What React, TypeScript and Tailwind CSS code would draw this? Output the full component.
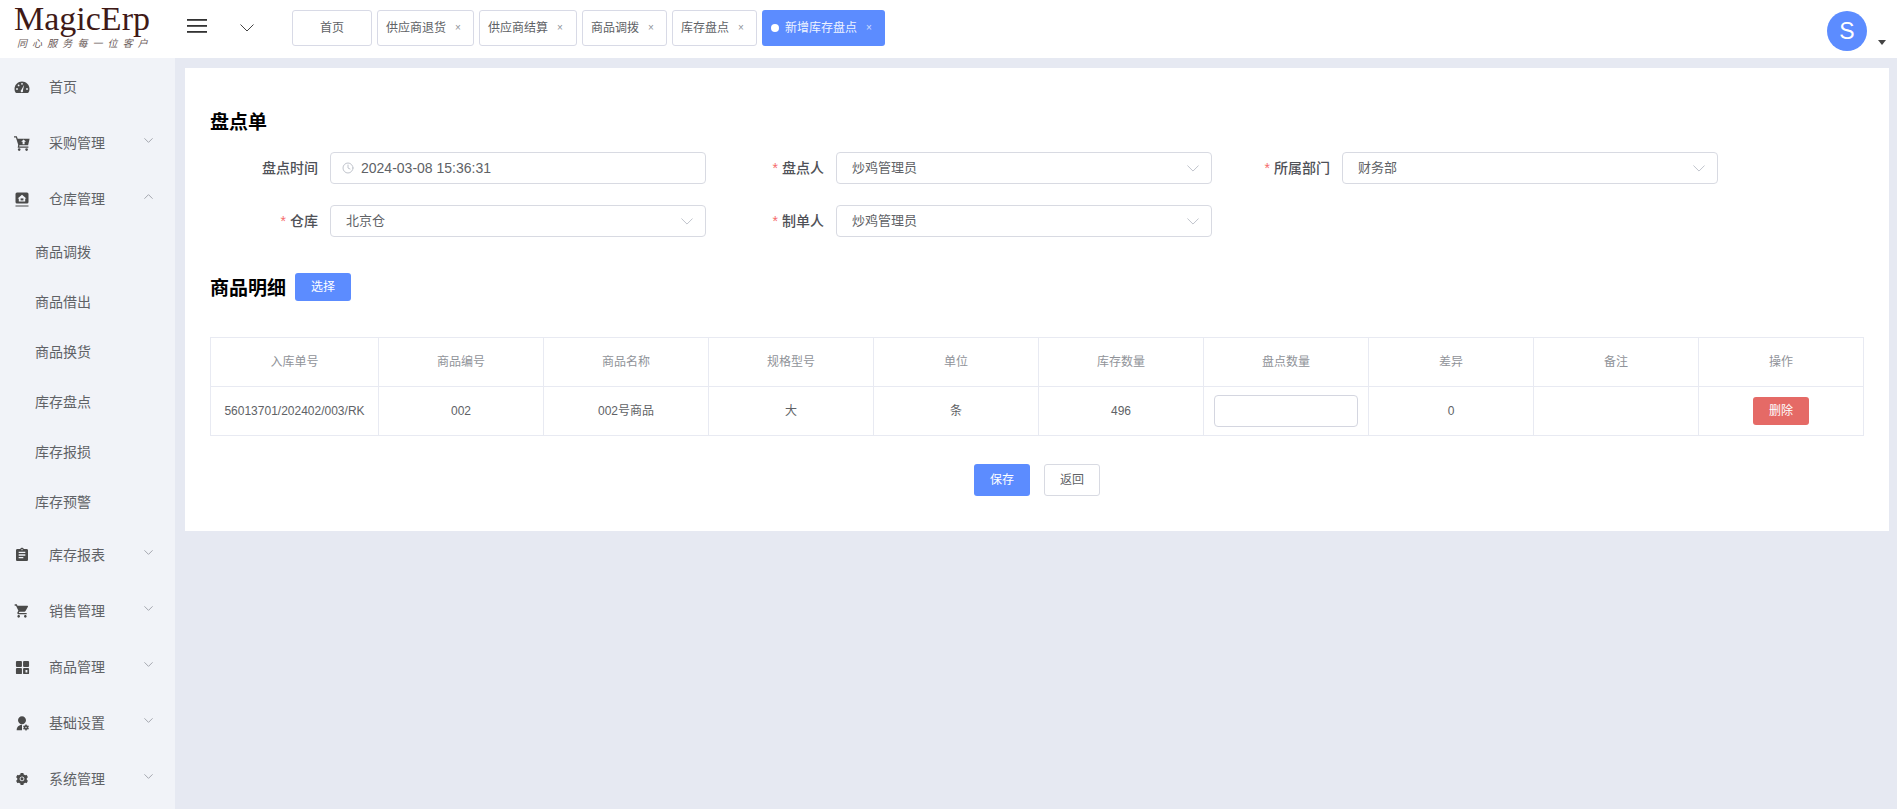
import { AiFillSetting } from 'react-icons/ai';
import { MdAssignment, MdShoppingCart } from 'react-icons/md';
import { RiUserSettingsFill } from 'react-icons/ri';
import { FiClock } from 'react-icons/fi';
import type { ReactNode } from 'react';

const font = 'font-["Liberation_Sans","Noto_Sans_CJK_SC",sans-serif]';

function Chevron({ up, className }: { up?: boolean; className: string }) {
    return (
        <svg viewBox="0 0 14 8" className={className} fill="none" stroke="currentColor" strokeWidth="1">
            <polyline vectorEffect="non-scaling-stroke" points={up ? '0.5,7.5 7,1 13.5,7.5' : '0.5,0.5 7,7 13.5,0.5'} />
        </svg>
    );
}

function GaugeIcon() {
    return (
        <svg viewBox="0 0 16 14" className="w-4 h-[14px]" fill="currentColor">
            <path d="M8 1.5C3.9 1.5.5 4.8.5 9c0 1.4.4 2.6 1 3.6.2.3.5.4.8.4h11.4c.3 0 .6-.1.8-.4.6-1 1-2.2 1-3.6 0-4.2-3.4-7.5-7.5-7.5z" />
            <g fill="#f1f3f8">
                <circle cx="3" cy="9" r="0.9" />
                <circle cx="4.6" cy="5.4" r="0.9" />
                <circle cx="8" cy="3.8" r="0.9" />
                <circle cx="13" cy="9" r="0.9" />
                <path d="M10.2 4.8 8.9 10.4a1.2 1.2 0 1 1-1.6-.4z" />
            </g>
        </svg>
    );
}

function PurchaseIcon() {
    return (
        <svg viewBox="0 0 16 15" className="w-4 h-[15px]" fill="currentColor">
            <path d="M0 0.3h2.8l.9 2.5H15.6l-1.5 6.4H5.4l-.2 1.3h9.2v1.2H3.7l.5-2.9L1.9 1.6H0z" />
            <circle cx="5.2" cy="13.6" r="1.3" />
            <circle cx="12.6" cy="13.6" r="1.3" />
            <path d="M9.6 3.4 12 5.8h-1.4v2.4H8.6V5.8H7.2z" fill="#f1f3f8" />
        </svg>
    );
}

function WarehouseIcon() {
    return (
        <svg viewBox="0 0 14 15" className="w-[14px] h-[15px]" fill="currentColor">
            <path d="M2 0.5h10A1.5 1.5 0 0 1 13.5 2v8A1.5 1.5 0 0 1 12 11.5H2A1.5 1.5 0 0 1 .5 10V2A1.5 1.5 0 0 1 2 .5z" />
            <path d="M7 2.8 11.4 6.6h-1.2v3H3.8v-3H2.6z" fill="#f1f3f8" />
            <rect x="5.6" y="6.4" width="2.8" height="2" />
            <rect x="0.5" y="13.5" width="13" height="1" />
        </svg>
    );
}

function GoodsIcon() {
    return (
        <svg viewBox="0 0 16 16" className="w-[15px] h-[15px]" fill="currentColor">
            <rect x="1" y="1" width="6.4" height="6.4" rx="1" />
            <rect x="8.6" y="1" width="6.4" height="6.4" rx="1" />
            <rect x="1" y="8.6" width="6.4" height="6.4" rx="1" />
            <path d="M9.6 8.6h4.4a1 1 0 0 1 1 1V14a1 1 0 0 1-1 1H9.6a1 1 0 0 1-1-1V9.6a1 1 0 0 1 1-1zm1.6 2v2.8h2v-2.8z" fillRule="evenodd" />
        </svg>
    );
}

function MenuItem({ icon, label, open, arrow = true }: { icon: ReactNode; label: string; open?: boolean; arrow?: boolean }) {
    return (
        <div className="h-14 flex items-center pl-[14px] pr-[22px] text-[#606266]">
            <span className="w-4 flex justify-center text-[#4a4a4a]">{icon}</span>
            <span className="ml-[19px] text-sm flex-1">{label}</span>
            {arrow && <Chevron up={open} className="text-[#a4a7af] w-[9px] h-[5px] -mt-[5px]" />}
        </div>
    );
}

function SubItem({ label }: { label: string }) {
    return <div className="h-[50px] flex items-center pl-[35px] text-sm text-[#606266]">{label}</div>;
}

function Tab({ label, w, active, center }: { label: string; w: string; active?: boolean; center?: boolean }) {
    if (active) {
        return (
            <div className={`${w} h-9 rounded-[3px] bg-[#5c8cff] text-white flex items-center pl-[9px] text-xs`}>
                <span className="w-2 h-2 rounded-full bg-white mr-[6px]" />
                <span className="opacity-90">{label}</span>
                <span className="ml-[9px] text-[10px] opacity-70">×</span>
            </div>
        );
    }
    return (
        <div className={`${w} h-9 rounded-[3px] bg-white border border-[#d8dae6] text-[#606266] flex items-center text-xs ${center ? 'justify-center' : 'pl-[8px]'}`}>
            <span>{label}</span>
            {!center && <span className="ml-[9px] text-[10px] text-[#909399]">×</span>}
        </div>
    );
}

function Field({ label, required, children }: { label: string; required?: boolean; children: ReactNode }) {
    return (
        <div className="flex items-center w-[496px] mr-[10px] shrink-0">
            <div className="w-[120px] pr-3 text-right text-sm text-[#4f5157] font-medium">
                {required && <span className="text-[#f56c6c] mr-1">*</span>}
                {label}
            </div>
            {children}
        </div>
    );
}

function SelectBox({ value }: { value: string }) {
    return (
        <div className="w-[376px] h-8 rounded-[4px] border border-[#d8dae2] bg-white flex items-center justify-between pl-[15px] pr-[12px] text-[13px] text-[#606266]">
            <span>{value}</span>
            <Chevron className="text-[#c0c4cc] w-[12px] h-[7px]" />
        </div>
    );
}

const columns = ['入库单号', '商品编号', '商品名称', '规格型号', '单位', '库存数量', '盘点数量', '差异', '备注', '操作'];

export default function App() {
    return (
        <div className={`${font} w-[1897px] h-[809px] overflow-hidden flex flex-col bg-[#e6e9f2]`}>
            {/* Header */}
            <header className="h-[58px] bg-white flex items-center shrink-0">
                <div className="w-[175px] pl-[14px] shrink-0 self-start">
                    <div className="font-['Liberation_Serif',serif] text-[34px] leading-[38px] text-[#3f1a17]">MagicErp</div>
                    <div className="text-[10px] leading-[12px] text-[#6a5a58] italic tracking-[5.1px] pl-[3px] whitespace-nowrap">同心服务每一位客户</div>
                </div>
                <svg viewBox="0 0 20 14" className="w-5 h-[14px] ml-[12px] -mt-[7px] text-[#333]" fill="currentColor">
                    <rect x="0" y="0" width="20" height="1.8" />
                    <rect x="0" y="6" width="20" height="1.8" />
                    <rect x="0" y="12" width="20" height="1.8" />
                </svg>
                <Chevron className="ml-[33px] w-[14px] h-2 -mt-[2px] text-[#444]" />
                <div className="ml-[38px] -mt-[2px] flex gap-[5px]">
                    <Tab label="首页" w="w-[80px]" center />
                    <Tab label="供应商退货" w="w-[97px]" />
                    <Tab label="供应商结算" w="w-[98px]" />
                    <Tab label="商品调拨" w="w-[85px]" />
                    <Tab label="库存盘点" w="w-[85px]" />
                    <Tab label="新增库存盘点" w="w-[123px]" active />
                </div>
                <div className="ml-auto flex items-center pr-[11px]">
                    <div className="w-10 h-10 mt-[4px] rounded-full bg-[#5c8cff] text-white text-[23px] font-medium flex items-center justify-center">S</div>
                    <span className="ml-[11px] mt-[26px] w-0 h-0 border-x-[4px] border-x-transparent border-t-[5px] border-t-[#444]" />
                </div>
            </header>

            <div className="flex flex-1 min-h-0">
                {/* Sidebar */}
                <aside className="w-[175px] shrink-0 bg-[#f1f3f8] pt-px">
                    <MenuItem icon={<GaugeIcon />} label="首页" arrow={false} />
                    <MenuItem icon={<PurchaseIcon />} label="采购管理" />
                    <MenuItem icon={<WarehouseIcon />} label="仓库管理" open />
                    {['商品调拨', '商品借出', '商品换货', '库存盘点', '库存报损', '库存预警'].map((s) => (
                        <SubItem key={s} label={s} />
                    ))}
                    <MenuItem icon={<MdAssignment className="w-[18px] h-[18px]" />} label="库存报表" />
                    <MenuItem icon={<MdShoppingCart className="w-[18px] h-[18px]" />} label="销售管理" />
                    <MenuItem icon={<GoodsIcon />} label="商品管理" />
                    <MenuItem icon={<RiUserSettingsFill className="w-[17px] h-[17px]" />} label="基础设置" />
                    <MenuItem icon={<AiFillSetting className="w-[14px] h-[14px]" />} label="系统管理" />
                </aside>

                {/* Content */}
                <main className="flex-1 pt-[10px] pl-[10px] pr-2">
                    <div className="bg-white h-[463px] pl-[25px] pr-[25px] pt-[43px]">
                        <h2 className="text-[19px] font-bold text-black leading-[24px]">盘点单</h2>
                        <div className="mt-[17px] flex">
                            <Field label="盘点时间">
                                <div className="w-[376px] h-8 rounded-[4px] border border-[#d8dae2] flex items-center pl-[11px] text-sm text-[#606266]">
                                    <FiClock className="text-[#c0c4cc] w-[12px] h-[12px] mr-[7px]" />
                                    <span>2024-03-08 15:36:31</span>
                                </div>
                            </Field>
                            <Field label="盘点人" required><SelectBox value="炒鸡管理员" /></Field>
                            <Field label="所属部门" required><SelectBox value="财务部" /></Field>
                        </div>
                        <div className="mt-[21px] flex">
                            <Field label="仓库" required><SelectBox value="北京仓" /></Field>
                            <Field label="制单人" required><SelectBox value="炒鸡管理员" /></Field>
                        </div>

                        <div className="mt-9 flex items-center h-7">
                            <h2 className="text-[19px] leading-7 mt-[3px] font-bold text-black">商品明细</h2>
                            <button className="ml-[9px] w-14 h-7 rounded-[3px] bg-[#5c8cff] text-white text-xs">选择</button>
                        </div>

                        <table className="mt-[36px] w-[1654px] table-fixed border-collapse text-xs text-center">
                            <colgroup>
                                <col className="w-[168px]" />
                            </colgroup>
                            <thead>
                                <tr className="h-[49px]">
                                    {columns.map((c) => (
                                        <th key={c} className="border border-[#e8eaf2] font-normal text-[#909399]">{c}</th>
                                    ))}
                                </tr>
                            </thead>
                            <tbody className="text-[#606266]">
                                <tr className="h-[49px]">
                                    <td className="border border-[#e8eaf2]">56013701/202402/003/RK</td>
                                    <td className="border border-[#e8eaf2]">002</td>
                                    <td className="border border-[#e8eaf2]">002号商品</td>
                                    <td className="border border-[#e8eaf2]">大</td>
                                    <td className="border border-[#e8eaf2]">条</td>
                                    <td className="border border-[#e8eaf2]">496</td>
                                    <td className="border border-[#e8eaf2] px-[10px]">
                                        <input className="w-full h-8 rounded-[4px] border border-[#d4d6e0] block outline-none" />
                                    </td>
                                    <td className="border border-[#e8eaf2]">0</td>
                                    <td className="border border-[#e8eaf2]" />
                                    <td className="border border-[#e8eaf2]">
                                        <button className="w-14 h-7 rounded-[3px] bg-[#e56a66] text-white text-xs">删除</button>
                                    </td>
                                </tr>
                            </tbody>
                        </table>

                        <div className="mt-[28px] flex justify-center gap-[14px] w-[1654px]">
                            <button className="w-14 h-8 rounded-[3px] bg-[#5c8cff] text-white text-xs">保存</button>
                            <button className="w-14 h-8 rounded-[3px] bg-white border border-[#d8dae2] text-[#606266] text-xs">返回</button>
                        </div>
                    </div>
                </main>
            </div>
        </div>
    );
}
